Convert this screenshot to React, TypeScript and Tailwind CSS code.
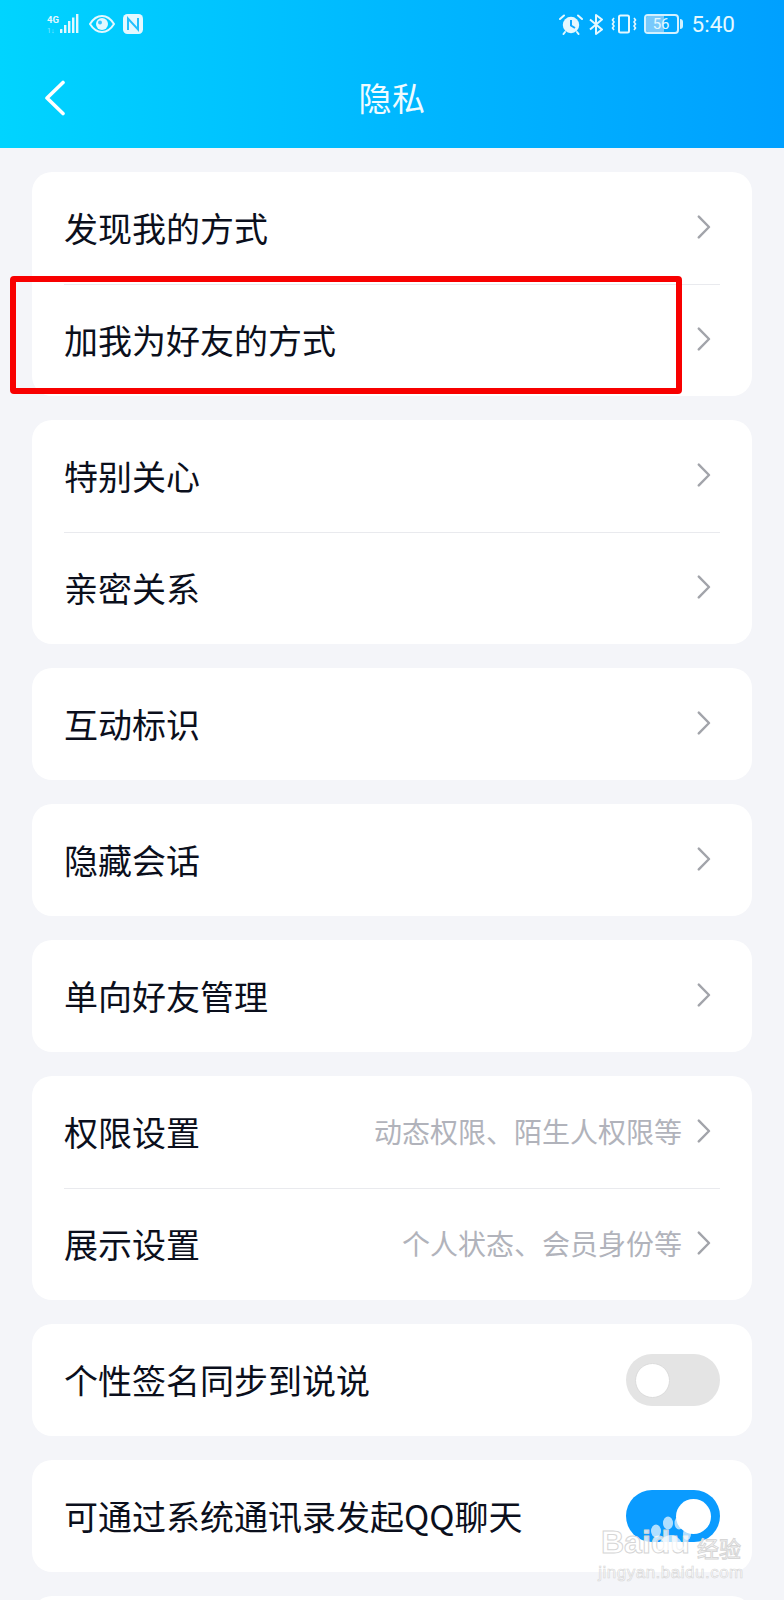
import React from 'react'

const cjk = 'font-["Noto_Sans_CJK_SC",sans-serif]'

function Chevron() {
  return (
    <svg width="14" height="24" viewBox="0 0 14 24" className="mr-[9px] shrink-0 -mt-[3px]">
      <path d="M1.8 1.6 L12 12 L1.8 22.4" fill="none" stroke="#a2a4aa" strokeWidth="2.4" strokeLinecap="round" strokeLinejoin="round" />
    </svg>
  )
}

function Toggle({ on }: { on?: boolean }) {
  return (
    <div className={`flex h-[52px] w-[94px] items-center rounded-full px-[9px] ${on ? 'justify-end bg-[#0a9bff]' : 'justify-start bg-[#e4e4e4]'}`}>
      <div className={`h-[35px] w-[35px] rounded-full bg-white ${on ? '' : 'border border-[#dcdcdc]'}`} />
    </div>
  )
}

type Item = { label: string; hint?: string; toggle?: 'on' | 'off' }

function Row({ item, divider }: { item: Item; divider: boolean }) {
  return (
    <div className="relative flex h-[112px] items-center justify-between px-8">
      {divider && <div className="absolute left-8 right-8 top-0 h-px bg-[#e9eaee]" />}
      <span className="text-[34px] leading-none text-[#0b0f1c]">{item.label}</span>
      {item.toggle ? (
        <Toggle on={item.toggle === 'on'} />
      ) : (
        <div className="flex items-center gap-[15px]">
          {item.hint && <span className="text-[28px] leading-none text-[#b1b3bb] -mt-[3px]">{item.hint}</span>}
          <Chevron />
        </div>
      )}
    </div>
  )
}

const groups: Item[][] = [
  [{ label: '发现我的方式' }, { label: '加我为好友的方式' }],
  [{ label: '特别关心' }, { label: '亲密关系' }],
  [{ label: '互动标识' }],
  [{ label: '隐藏会话' }],
  [{ label: '单向好友管理' }],
  [
    { label: '权限设置', hint: '动态权限、陌生人权限等' },
    { label: '展示设置', hint: '个人状态、会员身份等' },
  ],
  [{ label: '个性签名同步到说说', toggle: 'off' }],
  [{ label: '可通过系统通讯录发起QQ聊天', toggle: 'on' }],
  [{ label: '' }],
]

function StatusLeft() {
  return (
    <div className="flex items-center gap-[8px]">
      <svg width="34" height="20" viewBox="0 0 34 20" fill="#e4f8ff">
        <text x="0" y="9" fontSize="9.5" fontWeight="700" fontFamily="Roboto, sans-serif">4G</text>
        <text x="0" y="19" fontSize="7" fontFamily="Roboto, sans-serif" opacity="0.55">1↓</text>
        <rect x="13" y="15" width="2.4" height="4" rx="0.6" />
        <rect x="17" y="11" width="2.4" height="8" />
        <rect x="21" y="7" width="2.4" height="12" />
        <rect x="25" y="3.5" width="2.4" height="15.5" />
        <rect x="29" y="0" width="2.4" height="19" />
      </svg>
      <svg width="26" height="18" viewBox="0 0 26 18">
        <path d="M1 9 C5 2.5 9 1 13 1 C17 1 21 2.5 25 9 C21 15.5 17 17 13 17 C9 17 5 15.5 1 9 Z" fill="none" stroke="#e4f8ff" strokeWidth="2" />
        <circle cx="13" cy="9" r="6" fill="#e4f8ff" />
        <circle cx="11" cy="7.5" r="2" fill="#3cc4ff" />
      </svg>
      <svg width="20" height="20" viewBox="0 0 20 20">
        <rect x="0" y="0" width="20" height="20" rx="4.5" fill="#e4f8ff" />
        <path d="M5 16 V4.5 L15 15.5 V4" fill="none" stroke="#22c0ff" strokeWidth="2" />
      </svg>
    </div>
  )
}

function StatusRight() {
  return (
    <div className="flex items-center">
      <svg width="24" height="21" viewBox="0 0 24 21" className="mr-[6px]">
        <circle cx="12" cy="11" r="8.2" fill="#e4f8ff" />
        <path d="M12 6 V11.5 L16 14" fill="none" stroke="#0fa8ff" strokeWidth="2" />
        <path d="M1 5 L5 1.5 M23 5 L19 1.5 M6 18 L4.5 20 M18 18 L19.5 20" stroke="#e4f8ff" strokeWidth="2" strokeLinecap="round" />
      </svg>
      <svg width="14" height="21" viewBox="0 0 14 21" className="mr-[8px]">
        <path d="M1 5.5 L13 15.5 L7 20 V1 L13 5.5 L1 15.5" fill="none" stroke="#e4f8ff" strokeWidth="2" strokeLinejoin="round" />
      </svg>
      <svg width="26" height="20" viewBox="0 0 26 20" className="mr-[7px]">
        <rect x="8" y="1.5" width="10" height="17" rx="1.5" fill="none" stroke="#e4f8ff" strokeWidth="2" />
        <path d="M3 4 L1.5 6 L3 8 L1.5 10 L3 12 L1.5 14 L3 16 M23 4 L24.5 6 L23 8 L24.5 10 L23 12 L24.5 14 L23 16" fill="none" stroke="#e4f8ff" strokeWidth="1.6" />
      </svg>
      <div className="relative mr-[1px] h-[20px] w-[35px] overflow-hidden rounded-[4px] border-2 border-[#d2f1ff]">
        <div className="h-full w-[58%] bg-[#79c9fb]" />
        <span className="absolute inset-0 flex items-center justify-center font-['Roboto',sans-serif] text-[15px] leading-none text-[#e4f8ff]">56</span>
      </div>
      <div className="mr-[9px] h-[10px] w-[3px] rounded-r-sm bg-[#d2f1ff]" />
      <span className="font-['Roboto',sans-serif] text-[22.5px] leading-none text-[#e4f8ff]">5:40</span>
    </div>
  )
}

function Watermark() {
  return (
    <div className="pointer-events-none absolute left-[601px] top-[1526px] flex w-[140px] flex-col items-center text-white/75 [-webkit-text-stroke:1px_#d6d6d6]">
      <svg width="46" height="36" viewBox="0 0 46 36" className="absolute left-[48px] -top-[12px]" fill="#ffffff" fillOpacity="0.68">
        <ellipse cx="7" cy="17" rx="5" ry="6.5" />
        <ellipse cx="19" cy="9" rx="5" ry="6.5" />
        <ellipse cx="30" cy="9" rx="4.5" ry="6.5" />
        <ellipse cx="38" cy="20" rx="4" ry="6" />
        <path d="M8 36 C10 26 16 21 22 21 C29 21 34 28 35 36 Z" />
      </svg>
      <div className="flex w-full items-end justify-between font-['Liberation_Sans',sans-serif] leading-none">
        <span className="text-[32px] font-bold">Baidu</span>
        <span className="text-[22px] font-['Noto_Sans_CJK_SC',sans-serif]">经验</span>
      </div>
      <span className="mt-[6px] font-['Liberation_Sans',sans-serif] text-[17px] leading-none tracking-[0.5px] [-webkit-text-stroke:0.6px_#d6d6d6]">jingyan.baidu.com</span>
    </div>
  )
}

export default function App() {
  return (
    <div className={`relative h-[1600px] w-[784px] overflow-hidden bg-[#f4f5f9] ${cjk}`}>
      {/* Header */}
      <div className="h-[148px] bg-gradient-to-r from-[#00d4ff] via-[#00b8ff] to-[#00a0ff] px-[47px]">
        <div className="flex h-[48px] items-center justify-between pl-0 pr-[2px]">
          <StatusLeft />
          <StatusRight />
        </div>
        <div className="relative flex h-[100px] items-center justify-center">
          <svg width="22" height="36" viewBox="0 0 22 36" className="absolute -left-[3px] top-[32px]">
            <path d="M19 2.5 L3 18 L19 33.5" fill="none" stroke="#ffffff" strokeWidth="3.6" strokeLinecap="round" strokeLinejoin="round" />
          </svg>
          <span className="-mt-[2px] text-[33px] leading-none tracking-[0.5px] text-[#f0fbff]">隐私</span>
        </div>
      </div>

      {/* Settings groups */}
      <div className="flex flex-col gap-6 px-8 pt-6">
        {groups.map((group, i) => (
          <div key={i} className="rounded-[20px] bg-white">
            {group.map((item, j) => (
              <Row key={j} item={item} divider={j > 0} />
            ))}
          </div>
        ))}
      </div>

      {/* Red annotation box */}
      <div className="absolute left-[10px] top-[276px] h-[118px] w-[672px] rounded-[4px] border-[6px] border-[#f80000]" />
      <Watermark />
    </div>
  )
}
